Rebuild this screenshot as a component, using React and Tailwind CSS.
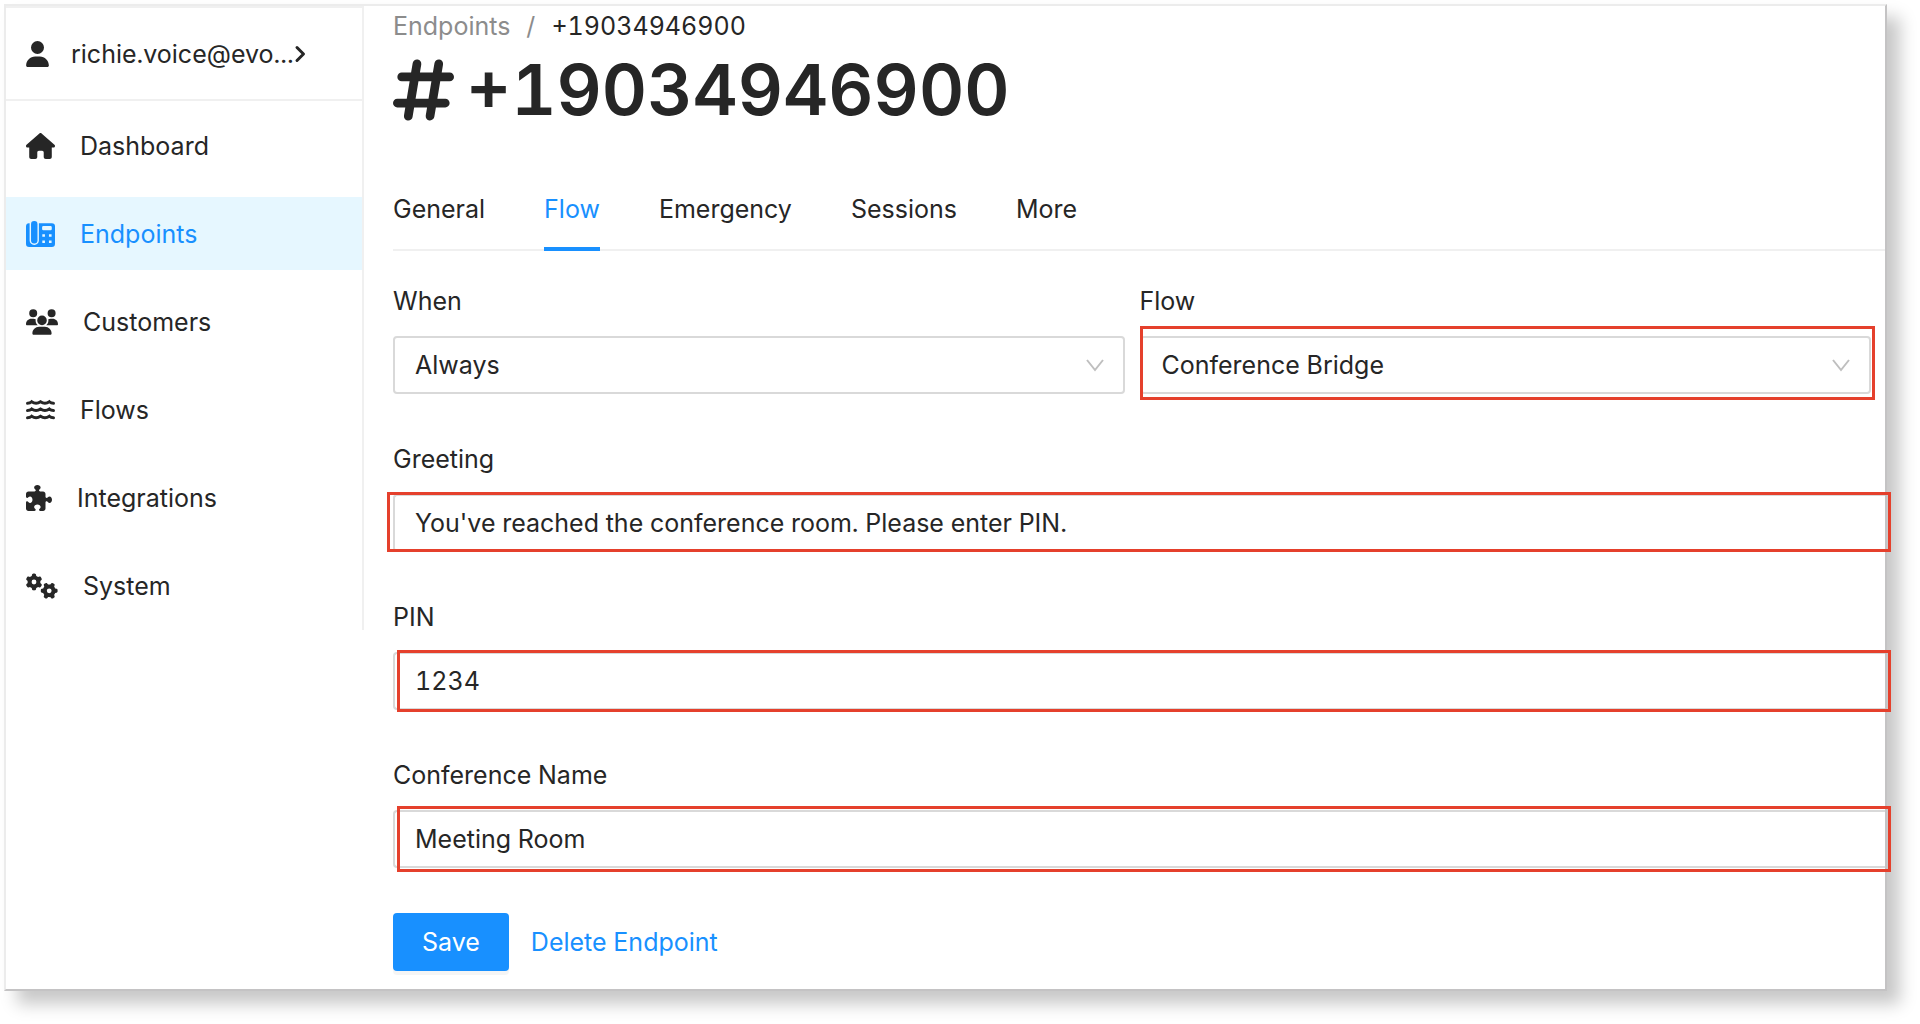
import { FaGears, FaHashtag, FaHouse, FaPuzzlePiece, FaUser, FaUsers } from 'react-icons/fa6'

function DeskPhoneIcon({ className }) {
  return (
    <svg className={className} viewBox="0 0 576 512" fill="currentColor">
      <path
        fillRule="evenodd"
        d="M72 44v340a88 88 0 0 0 88 88h8a88 88 0 0 0 88-88V40h256a64 64 0 0 1 64 64v344a64 64 0 0 1-64 64H64a64 64 0 0 1-64-64V104a64 64 0 0 1 72-60zM344 96a24 24 0 0 0-24 24v36a24 24 0 0 0 24 24h144a24 24 0 0 0 24-24v-36a24 24 0 0 0-24-24zM324 260h52v52h-52zM456 260h52v52h-52zM324 384h52v52h-52zM456 384h52v52h-52z"
      />
      <rect x="100" y="0" width="128" height="444" rx="60" />
    </svg>
  )
}

function WavesIcon({ className }) {
  return (
    <svg className={className} viewBox="0 0 576 512" fill="none" stroke="currentColor" strokeWidth="60" strokeLinecap="round">
      {[106, 250, 394].map((y) => (
        <path key={y} d={`M30 ${y + 16}c38 0 60-10 82-30 60 40 116 40 176 0 60 40 116 40 176 0 22 20 44 30 82 30`} />
      ))}
    </svg>
  )
}

function ArrowRight({ className }) {
  return (
    <svg className={className} viewBox="0 0 12 18" fill="none" stroke="currentColor" strokeWidth="3" strokeLinecap="round" strokeLinejoin="round">
      <path d="M3 2.5L9.5 9 3 15.5" />
    </svg>
  )
}

function Chevron({ className }) {
  return (
    <svg className={className} viewBox="0 0 18 13" fill="none" stroke="#bfbfbf" strokeWidth="2">
      <path d="M1 1l8 10 8-10" />
    </svg>
  )
}

const NAV = [
  { label: 'Dashboard', Icon: FaHouse, width: 'w-[29px]' },
  { label: 'Endpoints', Icon: DeskPhoneIcon, width: 'w-[29px]', active: true },
  { label: 'Customers', Icon: FaUsers, width: 'w-[32px]' },
  { label: 'Flows', Icon: WavesIcon, width: 'w-[29px]' },
  { label: 'Integrations', Icon: FaPuzzlePiece, width: 'w-[26px]' },
  { label: 'System', Icon: FaGears, width: 'w-[32px]' },
]

const TABS = ['General', 'Flow', 'Emergency', 'Sessions', 'More']

const FIELDS = [
  { id: 'greeting', label: 'Greeting', value: "You've reached the conference room. Please enter PIN.", mark: '-left-1.5 -right-1.5 -top-0.5 bottom-0' },
  { id: 'pin', label: 'PIN', value: '1234', mark: 'left-1 -right-1.5 -top-0.5 -bottom-0.5' },
  { id: 'conference-name', label: 'Conference Name', value: 'Meeting Room', mark: 'left-1 -right-1.5 -top-1 -bottom-1' },
]

function Highlight({ className }) {
  return <div className={`absolute border-3 border-[#e5402c] pointer-events-none ${className}`} />
}

function SelectField({ id, label, value, children }) {
  return (
    <div className="flex-1 min-w-0">
      <label htmlFor={id} className="block mb-[15px]">{label}</label>
      <div className="relative">
        <select id={id} defaultValue={value} className="block w-full h-[58px] px-5 appearance-none bg-white border-2 border-[#d9d9d9] rounded-sm">
          <option>{value}</option>
        </select>
        <Chevron className="absolute right-[21px] top-[23px] w-[18px] h-[13px] pointer-events-none" />
        {children}
      </div>
    </div>
  )
}

function Sidebar() {
  return (
    <aside className="w-[358px] shrink-0 self-start border-r-2 border-t-2 border-[#f0f0f0]">
      <button className="flex items-center w-full h-[93px] pl-5 border-b-2 border-[#f0f0f0] text-left">
        <FaUser className="h-[26px] w-[23px] mr-[22px] shrink-0" />
        <span>richie.voice@evo...</span>
        <ArrowRight className="h-[18px] w-3 shrink-0" />
      </button>
      <nav className="flex flex-col gap-[15px] pt-2 pb-2">
        {NAV.map(({ label, Icon, width, active }) => (
          <a
            key={label}
            href="#"
            className={`flex items-center h-[73px] pl-5 gap-[25px] ${active ? 'bg-[#e6f7ff] text-[#1890ff]' : ''}`}
          >
            <Icon className={`h-[26px] shrink-0 ${width}`} />
            {label}
          </a>
        ))}
      </nav>
    </aside>
  )
}

export default function App() {
  return (
    <div className="min-h-screen bg-white pl-1 pt-1 pr-[33px] pb-[33px] font-['Inter',sans-serif] text-[25px] leading-10 text-[#262626] tabular-nums">
      <div className="flex bg-white border-2 border-t-[#ececec] border-l-[#ececec] border-r-[#c4c3c4] border-b-[#c4c3c4] shadow-[13px_13px_16px_rgba(0,0,0,0.22)]">
        <Sidebar />

        <main className="flex-1 min-w-0 pl-[29px] pb-[18px]">
          {/* Breadcrumb */}
          <div className="flex gap-4">
            <a href="#" className="text-[#8c8c8c]">Endpoints</a>
            <span className="text-[#8c8c8c]">/</span>
            <span>+19034946900</span>
          </div>

          <h1 className="flex items-center gap-3 text-[70px] leading-[88px] font-semibold">
            <FaHashtag className="h-[70px] w-[61px]" />
            +19034946900
          </h1>

          <div role="tablist" className="flex gap-[59px] mt-[33px] border-b-2 border-[#f0f0f0]">
            {TABS.map((tab) => (
              <button
                key={tab}
                role="tab"
                aria-selected={tab === 'Flow'}
                className={`h-[84px] -mb-0.5 border-b-4 border-t-4 border-t-transparent ${tab === 'Flow' ? 'border-b-[#1890ff] text-[#1890ff]' : 'border-b-transparent'}`}
              >
                {tab}
              </button>
            ))}
          </div>

          <form className="flex flex-col gap-[45px] mt-[30px]" onSubmit={(e) => e.preventDefault()}>
            <div className="flex gap-[15px] pr-[14px]">
              <SelectField id="when" label="When" value="Always" />
              <SelectField id="flow" label="Flow" value="Conference Bridge">
                <Highlight className="left-0 -right-1 -top-2.5 -bottom-1.5" />
              </SelectField>
            </div>

            {FIELDS.map((field) => (
              <div key={field.id}>
                <label htmlFor={field.id} className="block mb-[15px]">{field.label}</label>
                <div className="relative">
                  <input
                    id={field.id}
                    type="text"
                    defaultValue={field.value}
                    className="block w-full h-[58px] px-5 bg-white border-2 border-r-0 border-[#d9d9d9] rounded-l-sm"
                  />
                  <Highlight className={field.mark} />
                </div>
              </div>
            ))}

            <div className="flex items-center gap-[22px]">
              <button type="submit" className="h-[58px] px-[29px] bg-[#1890ff] text-white rounded-sm shadow-[0_4px_0_rgba(0,0,0,0.04)]">
                Save
              </button>
              <button type="button" className="text-[#1890ff]">Delete Endpoint</button>
            </div>
          </form>
        </main>
      </div>
    </div>
  )
}
